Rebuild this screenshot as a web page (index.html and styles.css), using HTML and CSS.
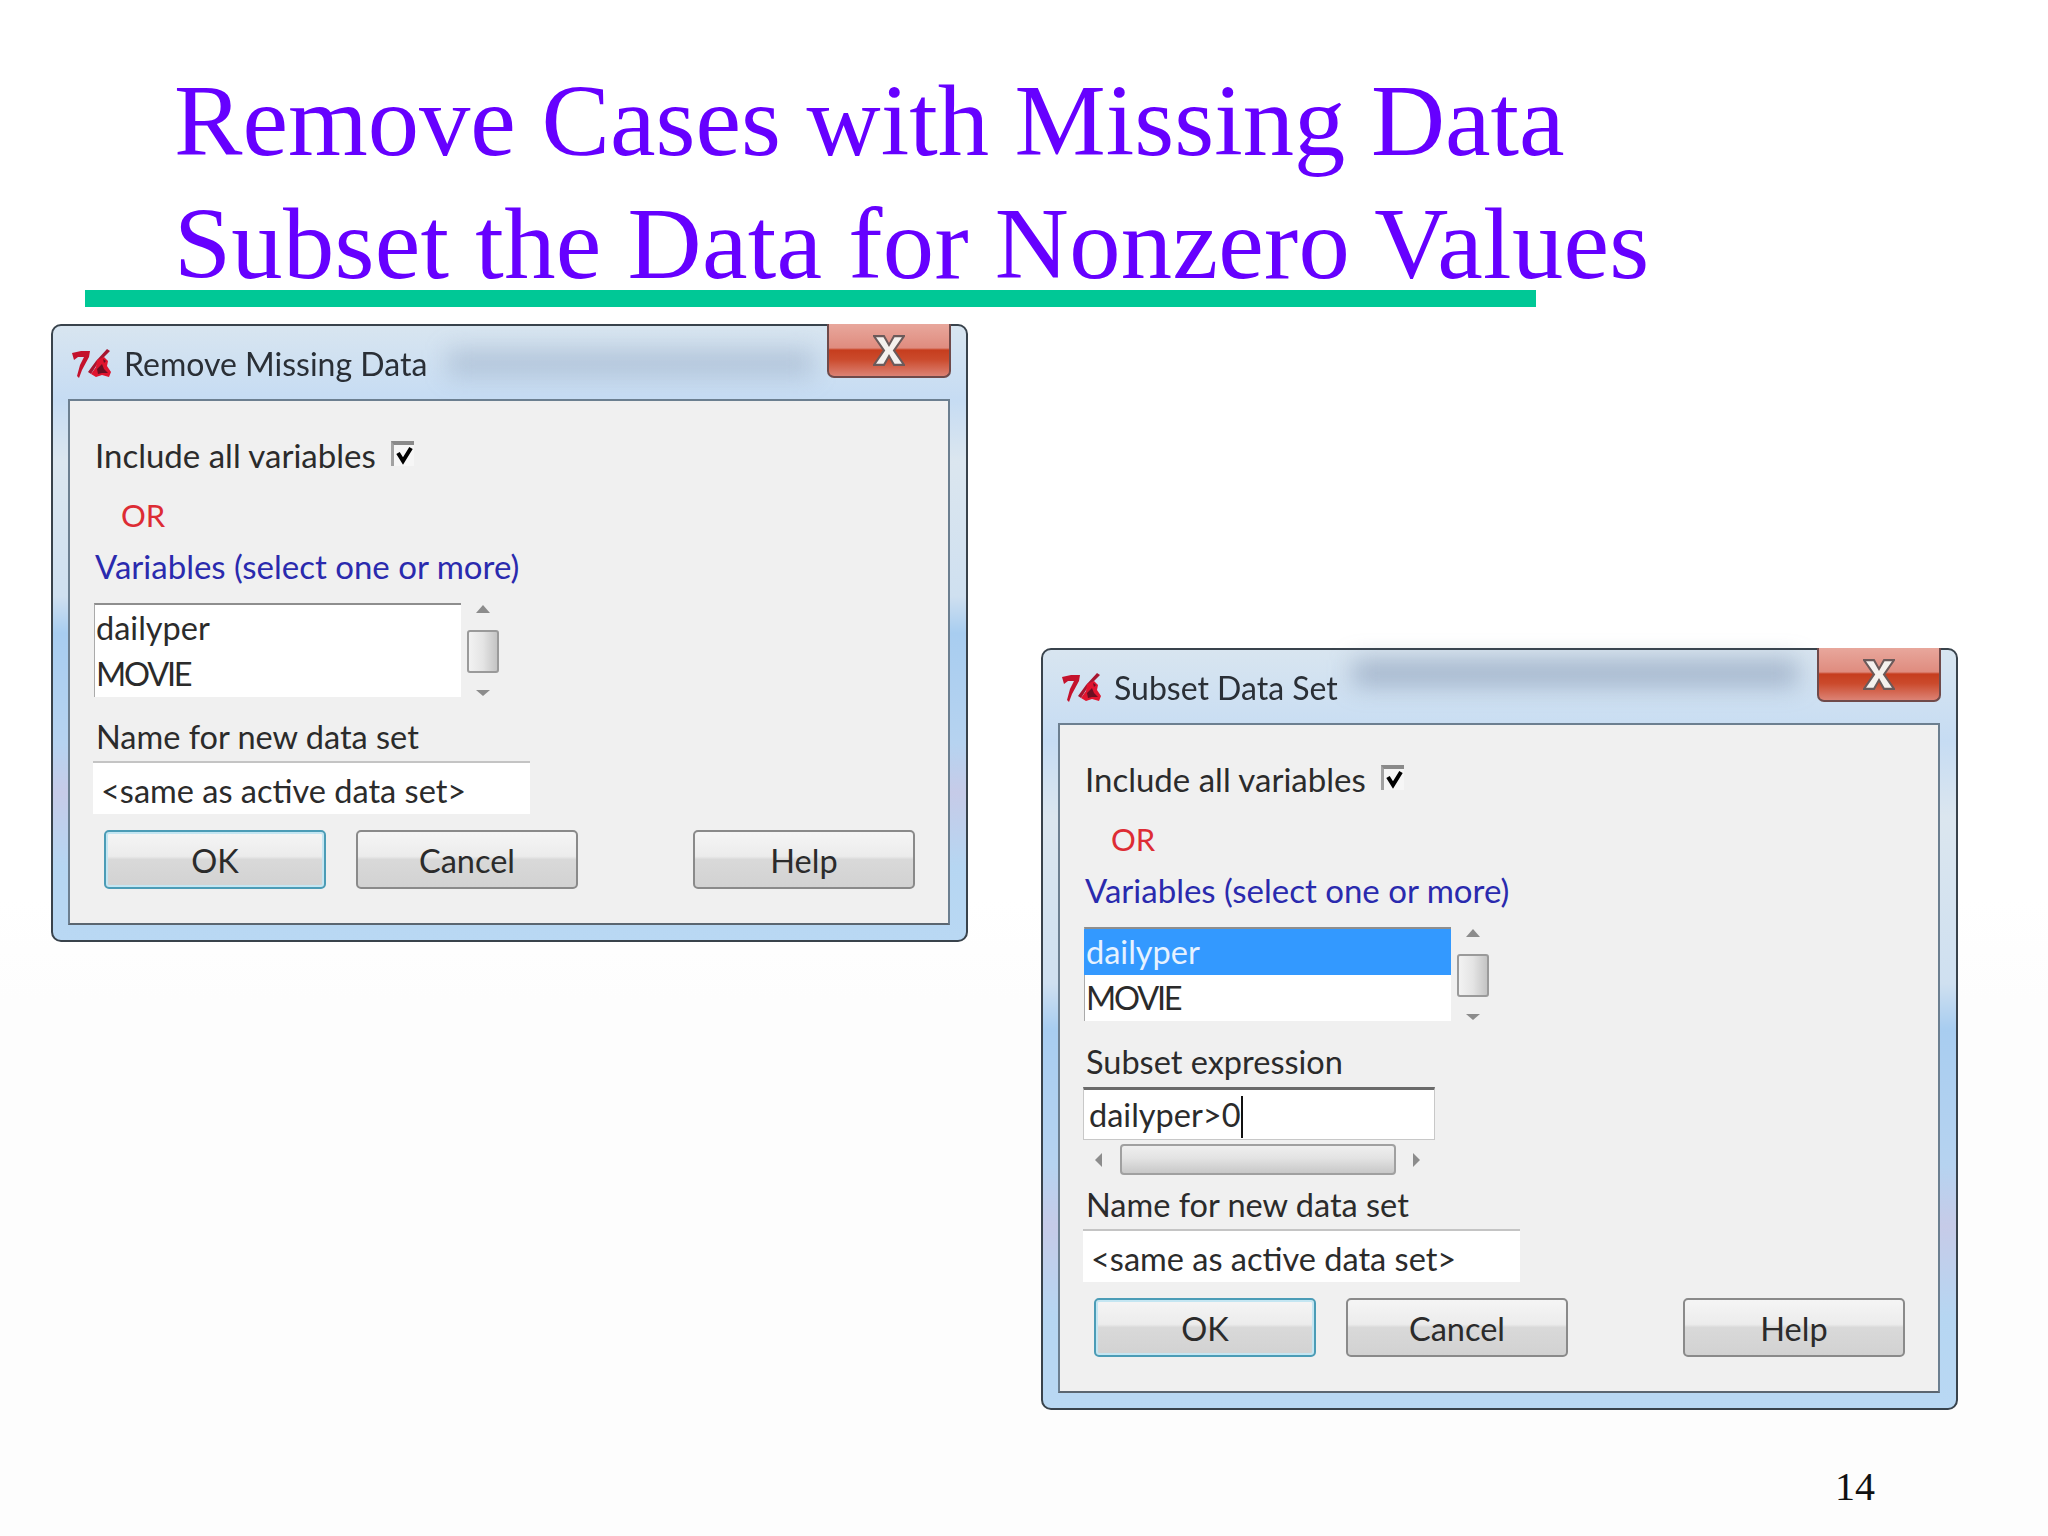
FILE: index.html
```html
<!DOCTYPE html>
<html lang="en">
<head>
    <meta charset="UTF-8">
    <title>Remove Cases with Missing Data</title>
    <link rel="stylesheet" href="styles.css">
</head>
<body>
    <svg class="defs" width="0" height="0">
        <symbol id="tk-logo" viewBox="0 0 40 30">
            <path d="M1 4 L10 2 L19 2 L18 8 L11 21 L8 29 L6 27 L9 16 L13 8 L7 8 L3 11 Z" fill="#c4122c"/>
            <path d="M36 0 L39 2 L27 14 L20 25 L17 23 L25 12 Z" fill="#a81630"/>
            <path d="M26 11 L33 8 L37 12 L36 17 L40 23 L38 28 L31 26 L25 28 L20 25 L25 18 Z" fill="#e0142e"/>
            <path d="M26 20 L31 15 L33 20 L37 24 L31 24 L27 25 Z" fill="#6a0f22"/>
            <path d="M32 10 L35 12 L33 14 Z" fill="#6a0f22"/>
        </symbol>
        <symbol id="close-x" viewBox="0 0 32 28" preserveAspectRatio="none">
            <path d="M1 1 H11 L16 9 L21 1 H31 L21 14 L31 27 H21 L16 19 L11 27 H1 L11 14 Z" fill="#f4f1ee" stroke="#6b5a5a" stroke-width="2"/>
        </symbol>
    </svg>

    <div class="slide">
        <div class="slide-title">
            <div>Remove Cases with Missing Data</div>
            <div class="title-second">Subset the Data for Nonzero Values</div>
        </div>
        <div class="title-rule"></div>

        <!-- first dialog -->
        <div class="dialog dialog-remove">
            <div class="titlebar">
                <svg class="app-icon"><use href="#tk-logo"/></svg>
                <span class="dialog-name">Remove Missing Data</span>
                <div class="close-btn"><svg class="close-x"><use href="#close-x"/></svg></div>
            </div>
            <div class="client">
                <div class="check-row">
                    <span class="label">Include all variables</span>
                    <span class="checkbox">
                        <svg viewBox="0 0 20 21"><path d="M4 8 L9 16 L17 3" stroke="#000" stroke-width="4" fill="none"/></svg>
                    </span>
                </div>
                <div class="label or-label">OR</div>
                <div class="label vars-label">Variables (select one or more)</div>
                <div class="list-row">
                    <div class="listbox">
                        <div class="list-item">dailyper</div>
                        <div class="list-item list-caps">MOVIE</div>
                    </div>
                    <div class="vscroll">
                        <span class="arrow-up"></span>
                        <span class="vthumb"></span>
                        <span class="arrow-down"></span>
                    </div>
                </div>
                <div class="label name-label">Name for new data set</div>
                <div class="entry entry-name">&lt;same as active data set&gt;</div>
                <div class="button-row">
                    <div class="btn btn-default">OK</div>
                    <div class="btn">Cancel</div>
                    <div class="btn btn-help">Help</div>
                </div>
            </div>
        </div>

        <!-- second dialog -->
        <div class="dialog dialog-subset">
            <div class="titlebar">
                <svg class="app-icon"><use href="#tk-logo"/></svg>
                <span class="dialog-name">Subset Data Set</span>
                <div class="close-btn"><svg class="close-x"><use href="#close-x"/></svg></div>
            </div>
            <div class="client">
                <div class="check-row">
                    <span class="label">Include all variables</span>
                    <span class="checkbox">
                        <svg viewBox="0 0 20 21"><path d="M4 8 L9 16 L17 3" stroke="#000" stroke-width="4" fill="none"/></svg>
                    </span>
                </div>
                <div class="label or-label">OR</div>
                <div class="label vars-label">Variables (select one or more)</div>
                <div class="list-row">
                    <div class="listbox">
                        <div class="list-item selected">dailyper</div>
                        <div class="list-item list-caps">MOVIE</div>
                    </div>
                    <div class="vscroll">
                        <span class="arrow-up"></span>
                        <span class="vthumb"></span>
                        <span class="arrow-down"></span>
                    </div>
                </div>
                <div class="label subset-label">Subset expression</div>
                <div class="entry entry-expr">dailyper&gt;0<span class="caret"></span></div>
                <div class="hscroll">
                    <span class="arrow-left"></span>
                    <span class="hthumb"></span>
                    <span class="arrow-right"></span>
                </div>
                <div class="label name-label-low">Name for new data set</div>
                <div class="entry entry-name">&lt;same as active data set&gt;</div>
                <div class="button-row">
                    <div class="btn btn-default">OK</div>
                    <div class="btn">Cancel</div>
                    <div class="btn btn-help">Help</div>
                </div>
            </div>
        </div>

        <div class="page-number">14</div>
    </div>
</body>
</html>
```

FILE: styles.css
```css
html, body {
    margin: 0;
    padding: 0;
    background-color: #fff;
}
.defs {
    position: absolute;
}
.slide {
    position: relative;
    width: 2048px;
    height: 1536px;
    overflow: hidden;
    background: linear-gradient(to bottom, #fff 0, #fff 900px, #fdfdfd 1000px, #fdfdfd 100%);
}
.slide-title {
    padding: 59px 0 0 174px;
    font-family: "Liberation Serif", serif;
    font-size: 102.6px;
    line-height: 123px;
    color: #6600ff;
    white-space: nowrap;
}
.title-second {
    letter-spacing: 0.3px;
}
.title-rule {
    width: 1451px;
    height: 17px;
    margin: -15px 0 0 85px;
    background-color: #00c896;
}
.page-number {
    position: absolute;
    left: 1835px;
    top: 1464px;
    font-family: "Liberation Serif", serif;
    font-size: 40px;
    line-height: 46px;
    color: #111;
}

/* windows */
.dialog {
    position: absolute;
    width: 917px;
    box-sizing: border-box;
    padding: 0 16px 15px 15px;
    border: 2px solid #39434c;
    border-radius: 10px;
    font-family: Lato, "Noto Sans", sans-serif;
    font-size: 32.5px;
    color: #2b2b2b;
    filter: blur(0.5px);
    background: linear-gradient(to bottom, #d8e5f0 0, #c6dcf3 12%, #dbe6ef 22%, #cfe0f0 44%, #a8cdf0 50%, #b6d3f0 68%, #c6cbe8 76%, #b6d6f2 88%, #b9d8f3 100%);
}
.dialog-remove {
    left: 51px;
    top: 324px;
    height: 618px;
}
.dialog-subset {
    left: 1041px;
    top: 648px;
    height: 762px;
}
.titlebar {
    position: relative;
    display: flex;
    align-items: center;
    height: 73px;
    box-sizing: border-box;
    margin: 0 -16px 0 -15px;
    padding-left: 18px;
    font-size: 32px;
}
/* blurred glass behind the title bar */
.titlebar::before {
    content: "";
    position: absolute;
    height: 26px;
    background-color: rgba(110, 130, 160, 0.3);
    filter: blur(12px);
}
.dialog-remove .titlebar::before {
    left: 395px;
    width: 365px;
    top: 24px;
}
.dialog-subset .titlebar::before {
    left: 310px;
    width: 445px;
    top: 10px;
    background-color: rgba(90, 110, 145, 0.4);
}
.app-icon {
    position: relative;
    width: 40px;
    height: 30px;
    margin-right: 13px;
    margin-top: 3px;
}
.dialog-name {
    position: relative;
    margin-top: 2px;
    color: #2a2f36;
}
.close-btn {
    position: absolute;
    right: 15px;
    top: -2px;
    width: 124px;
    height: 54px;
    box-sizing: border-box;
    display: flex;
    align-items: center;
    justify-content: center;
    border: 2px solid #6f4a4a;
    border-top: none;
    border-radius: 0 0 7px 7px;
    background: linear-gradient(to bottom, #e8a79c 0, #df8c7f 46%, #c63d1e 50%, #cb4a2c 68%, #dc8274 100%);
}
.close-x {
    width: 32px;
    height: 31px;
}
.client {
    height: calc(100% - 73px);
    box-sizing: border-box;
    padding: 34px 0 0 25px;
    border: 2px solid #6c7f90;
    border-bottom-color: #5b6670;
    background-color: #f0f0f0;
}

/* form rows */
.label {
    height: 40px;
    line-height: 40px;
    white-space: nowrap;
}
.check-row {
    display: flex;
    align-items: center;
    gap: 15px;
    font-size: 33px;
}
.checkbox {
    display: block;
    width: 20px;
    height: 21px;
    border-left: 3px solid #a2a2a2;
    border-top: 4px solid #8a8a8a;
    background-color: #f6f6f6;
    margin-top: -4px;
}
.checkbox svg {
    display: block;
    width: 20px;
    height: 21px;
}
.or-label {
    margin-top: 20px;
    margin-left: 26px;
    font-size: 31px;
    color: #dd2c34;
}
.vars-label {
    margin-top: 11px;
    font-size: 33px;
    color: #2a2aae;
}
.list-row {
    display: flex;
    margin-top: 17px;
    margin-left: -1px;
}
.listbox {
    width: 367px;
    height: 94px;
    box-sizing: border-box;
    border-top: 2px solid #8e8e8e;
    border-left: 1px solid #aaa;
    background-color: #fff;
}
.list-item {
    height: 46px;
    line-height: 46px;
    padding-left: 1px;
    color: #2b2b2b;
}
.list-item.selected {
    margin-left: -1px;
    padding-left: 2px;
    background-color: #3399ff;
    color: #e6f2ff;
}
.list-caps {
    letter-spacing: -2.2px;
}
.vscroll {
    display: flex;
    flex-direction: column;
    align-items: center;
    justify-content: space-between;
    width: 32px;
    height: 93px;
    margin-left: 6px;
    padding-top: 2px;
    box-sizing: border-box;
}
.arrow-up, .arrow-down {
    width: 0;
    height: 0;
    border-left: 7px solid transparent;
    border-right: 7px solid transparent;
}
.arrow-up {
    border-bottom: 8px solid #8c8c8c;
}
.arrow-down {
    border-top: 6px solid #8c8c8c;
}
.vthumb {
    display: block;
    width: 32px;
    height: 43px;
    box-sizing: border-box;
    border: 2px solid #9a9a9a;
    border-radius: 3px;
    background: linear-gradient(to right, #f2f2f2 0, #e4e4e4 50%, #c4c4c4 100%);
}
.name-label {
    margin-top: 20px;
    margin-left: 1px;
}
.subset-label {
    margin-top: 21px;
    margin-left: 1px;
}
.name-label-low {
    margin-top: 10px;
    margin-left: 1px;
}
.entry {
    height: 53px;
    line-height: 50px;
    box-sizing: border-box;
    background-color: #fff;
    white-space: nowrap;
}
.entry-name {
    width: 437px;
    margin: 4px 0 0 -2px;
    padding-left: 8px;
    line-height: 56px;
    border-top: 2px solid #c4c4c4;
}
.entry-expr {
    position: relative;
    width: 352px;
    margin: 5px 0 0 -2px;
    padding-left: 5px;
    border: 1px solid #c8c8c8;
    border-top: 3px solid #6a6a6a;
}
.caret {
    display: inline-block;
    width: 2px;
    height: 42px;
    margin-left: 1px;
    vertical-align: -11px;
    background-color: #111;
}
.hscroll {
    display: flex;
    align-items: center;
    width: 352px;
    height: 31px;
    margin: 4px 0 0 -2px;
}
.arrow-left, .arrow-right {
    width: 0;
    height: 0;
    border-top: 7px solid transparent;
    border-bottom: 7px solid transparent;
}
.arrow-left {
    margin-left: 12px;
    border-right: 7px solid #8c8c8c;
}
.arrow-right {
    margin-left: 17px;
    border-left: 7px solid #8c8c8c;
}
.hthumb {
    display: block;
    width: 276px;
    height: 31px;
    margin-left: 18px;
    box-sizing: border-box;
    border: 2px solid #a0a0a0;
    border-radius: 4px;
    background: linear-gradient(to bottom, #efefef 0, #e3e3e3 45%, #c8c8c8 100%);
}
.button-row {
    display: flex;
    margin: 16px 0 0 9px;
}
.btn {
    width: 222px;
    height: 59px;
    box-sizing: border-box;
    margin-right: 30px;
    line-height: 57px;
    text-align: center;
    border: 2px solid #8a8a8a;
    border-radius: 5px;
    background: linear-gradient(to bottom, #f5f5f5 0, #ececec 44%, #d9d9d9 50%, #d2d2d2 100%);
}
.btn-default {
    border-color: #4b9cb6;
    box-shadow: inset 0 0 0 2px #c4e6f2;
}
.btn-help {
    margin-left: 85px;
    margin-right: 0;
}
```
